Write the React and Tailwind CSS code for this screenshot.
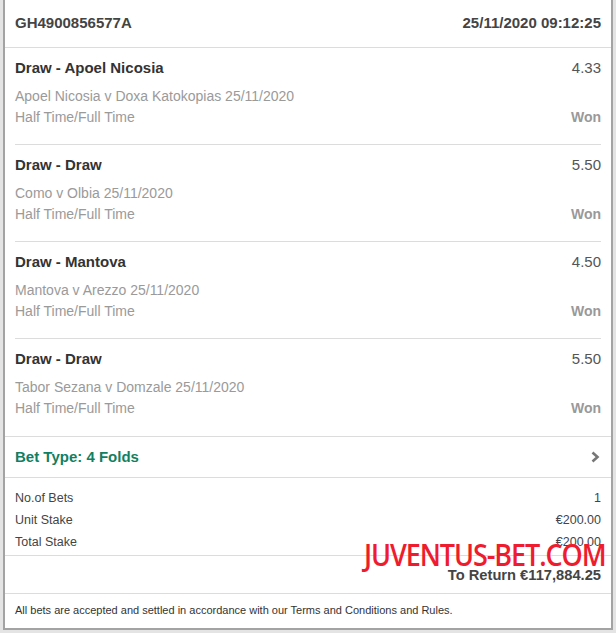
const selections = [
  { pick: 'Draw - Apoel Nicosia', odds: '4.33', event: 'Apoel Nicosia v Doxa Katokopias 25/11/2020' },
  { pick: 'Draw - Draw', odds: '5.50', event: 'Como v Olbia 25/11/2020' },
  { pick: 'Draw - Mantova', odds: '4.50', event: 'Mantova v Arezzo 25/11/2020' },
  { pick: 'Draw - Draw', odds: '5.50', event: 'Tabor Sezana v Domzale 25/11/2020' },
]

const stakes = [
  ['No.of Bets', '1'],
  ['Unit Stake', '€200.00'],
  ['Total Stake', '€200.00'],
]

export default function App() {
  return (
    <div className="h-[633px] w-[616px] overflow-hidden bg-[#e4e4e4] pl-[3px] pr-[3px] font-['Liberation_Sans',Arial,sans-serif]">
      <div className="relative h-[630px] w-[610px] border-x-2 border-b-2 border-[#a3a3a3] bg-white">
        <div className="flex h-[48px] items-center justify-between border-b border-[#dcdcdc] px-[10px] text-[15px] font-bold text-[#444]">
          <span>GH4900856577A</span>
          <span>25/11/2020 09:12:25</span>
        </div>

        <div className="px-[10px]">
          {selections.map((s, i) => (
            <div
              key={i}
              className={`h-[97px] pt-[10px] ${i < selections.length - 1 ? 'border-b border-[#dcdcdc]' : ''}`}
            >
              <div className="flex items-center justify-between leading-[20px]">
                <span className="text-[15px] font-bold text-[#333]">{s.pick}</span>
                <span className="text-[15px] text-[#555]">{s.odds}</span>
              </div>
              <div className="mt-[8px] text-[14px] leading-[20px] text-[#9a9a9a]">{s.event}</div>
              <div className="mt-[1px] flex items-center justify-between leading-[20px]">
                <span className="text-[14px] text-[#9a9a9a]">Half Time/Full Time</span>
                <span className="text-[14px] font-bold text-[#999]">Won</span>
              </div>
            </div>
          ))}
        </div>

        <div className="flex h-[42px] items-center justify-between border-y border-[#dcdcdc] px-[10px]">
          <span className="text-[15px] font-bold text-[#127f63]">Bet Type: 4 Folds</span>
          <svg width="9" height="12" viewBox="0 0 9 12" className="mr-[1px]">
            <path d="M1.5 1.5 L6.5 6 L1.5 10.5" fill="none" stroke="#777" strokeWidth="2.6" />
          </svg>
        </div>

        <div className="border-b border-[#dcdcdc] px-[10px] pt-[9px] pb-[2px] text-[12.5px] text-[#444]">
          {stakes.map(([label, value]) => (
            <div key={label} className="flex h-[22px] items-center justify-between">
              <span>{label}</span>
              <span>{value}</span>
            </div>
          ))}
        </div>

        <div className="flex h-[38px] items-center justify-end border-b border-[#dcdcdc] px-[10px] pt-[2px] text-[14.7px] font-bold text-[#444]">
          To Return €117,884.25
        </div>

        <div className="flex h-[33px] items-center px-[10px] text-[11px] text-[#333]">
          All bets are accepted and settled in accordance with our Terms and Conditions and Rules.
        </div>

        <div className="absolute left-[359px] top-[537px] origin-left scale-x-90 whitespace-nowrap font-['Open_Sans',sans-serif] text-[30px] leading-[36px] font-semibold tracking-[-1.2px] text-[#ee1c2e]">
          JUVENTUS-BET.COM
        </div>
      </div>
    </div>
  )
}
